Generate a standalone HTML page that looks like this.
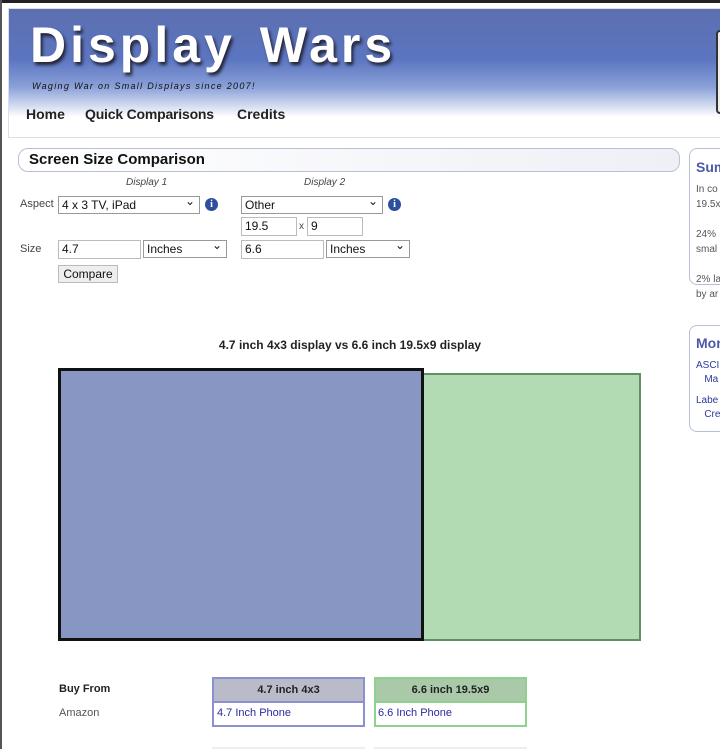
<!DOCTYPE html>
<html><head><style>
body{margin:0;width:720px;height:749px;overflow:hidden;background:#fff;font-family:"Liberation Sans",sans-serif;position:relative}
.a{position:absolute}
.sel{position:absolute;border:1px solid #999;font-size:12px;line-height:16px;padding-left:3px;box-sizing:border-box;height:18px;color:#111;background:#fff}
.sel:after{content:"⌄";position:absolute;right:4px;top:-4px;font-size:12px}
.inp{position:absolute;border:1px solid #bbb;height:19px;box-sizing:border-box;font-size:12px;line-height:17px;padding-left:3px;color:#111}
.info{position:absolute;width:13px;height:13px;border-radius:50%;background:#2e4f9e;color:#fff;font-size:10px;font-weight:bold;text-align:center;line-height:13px;font-family:"Liberation Serif",serif}
.nw{white-space:nowrap;overflow:hidden}
</style></head><body>
<div class="a" style="left:0;top:0;width:720px;height:3px;background:#222"></div>
<div class="a" style="left:0;top:0;width:2px;height:749px;background:#555"></div>
<div class="a" style="left:8px;top:8px;width:712px;height:128px;border:1px solid #dde;border-right:none;background:linear-gradient(#5d6fb0 0px,#5b75c0 50px,#8aa0d8 78px,#fff 108px)"></div>
<div class="a" style="left:30px;top:16px;font-size:50px;font-weight:bold;color:#fff;letter-spacing:4px;word-spacing:6px;text-shadow:2px 3px 3px #223">Display Wars</div>
<div class="a" style="left:32px;top:81px;font-size:9px;color:#111;letter-spacing:1.3px;font-style:italic">Waging War on Small Displays since 2007!</div>
<div class="a" style="left:26px;top:106px;font-size:14px;font-weight:bold;color:#222">Home</div>
<div class="a" style="left:85px;top:106px;font-size:14px;font-weight:bold;color:#222;letter-spacing:-0.2px">Quick Comparisons</div>
<div class="a" style="left:237px;top:106px;font-size:14px;font-weight:bold;color:#222">Credits</div>
<div class="a" style="left:716px;top:30px;width:6px;height:80px;border:2px solid #333;border-right:none;border-radius:4px 0 0 4px;background:#eee"></div>

<div class="a" style="left:18px;top:148px;width:662px;height:24px;border:1px solid #b8c0d8;border-radius:10px;box-sizing:border-box;background:linear-gradient(90deg,#fff,#eef0f6)"></div>
<div class="a" style="left:29px;top:151px;font-size:15px;font-weight:bold;color:#111">Screen Size Comparison</div>
<div class="a" style="left:126px;top:177px;font-size:10px;font-style:italic;color:#444">Display 1</div>
<div class="a" style="left:304px;top:177px;font-size:10px;font-style:italic;color:#444">Display 2</div>
<div class="a" style="left:20px;top:198px;font-size:11px;color:#444">Aspect</div>
<div class="sel" style="left:58px;top:196px;width:142px">4 x 3 TV, iPad</div>
<div class="info" style="left:205px;top:198px">i</div>
<div class="sel" style="left:241px;top:196px;width:142px">Other</div>
<div class="info" style="left:388px;top:198px">i</div>
<div class="inp" style="left:241px;top:217px;width:56px">19.5</div>
<div class="a" style="left:299px;top:221px;font-size:10px;color:#444">x</div>
<div class="inp" style="left:307px;top:217px;width:56px">9</div>
<div class="a" style="left:20px;top:243px;font-size:11px;color:#444">Size</div>
<div class="inp" style="left:58px;top:240px;width:83px">4.7</div>
<div class="sel" style="left:143px;top:240px;width:84px">Inches</div>
<div class="inp" style="left:241px;top:240px;width:83px">6.6</div>
<div class="sel" style="left:326px;top:240px;width:84px">Inches</div>
<div class="a" style="left:58px;top:265px;width:60px;height:18px;border:1px solid #bbb;background:#eee;box-sizing:border-box;font-size:12px;line-height:16px;text-align:center;color:#111">Compare</div>

<div class="a" style="left:689px;top:148px;width:40px;height:137px;border:1px solid #b8c0d8;border-radius:8px;box-sizing:border-box"></div>
<div class="a nw" style="left:696px;top:159px;width:24px;font-size:14px;font-weight:bold;color:#4a5aa8">Sum</div>
<div class="a nw" style="left:696px;top:182px;width:24px;font-size:10px;line-height:15px;color:#555">In co<br>19.5x<br><br>24%<br>smal<br><br>2% la<br>by ar</div>
<div class="a" style="left:689px;top:325px;width:40px;height:107px;border:1px solid #b8c0d8;border-radius:8px;box-sizing:border-box"></div>
<div class="a nw" style="left:696px;top:335px;width:24px;font-size:14px;font-weight:bold;color:#4a5aa8">Mor</div>
<div class="a nw" style="left:696px;top:359px;width:24px;font-size:10px;line-height:14px;color:#2a3a99">ASCI<br>&nbsp;&nbsp;&nbsp;Ma</div>
<div class="a nw" style="left:696px;top:394px;width:24px;font-size:10px;line-height:14px;color:#2a3a99">Labe<br>&nbsp;&nbsp;&nbsp;Cre</div>

<div class="a" style="left:0;top:338px;width:700px;text-align:center;font-size:12px;font-weight:bold;color:#222">4.7 inch 4x3 display vs 6.6 inch 19.5x9 display</div>
<div class="a" style="left:59px;top:373px;width:582px;height:268px;background:#b2dbb4;border:2px solid #5f8f63;box-sizing:border-box"></div>
<div class="a" style="left:58px;top:368px;width:366px;height:273px;background:#8896c4;border:3px solid #111;box-sizing:border-box"></div>

<div class="a" style="left:59px;top:683px;font-size:11px;font-weight:bold;color:#222">Buy From</div>
<div class="a" style="left:59px;top:707px;font-size:11px;color:#555">Amazon</div>
<div class="a" style="left:212px;top:677px;width:153px;height:50px;border:2px solid #8c8fd0;box-sizing:border-box"></div>
<div class="a" style="left:214px;top:679px;width:149px;height:22px;background:#babbc9;border-bottom:2px solid #8c8fd0;font-size:11px;font-weight:bold;line-height:22px;text-align:center;color:#222">4.7 inch 4x3</div>
<div class="a" style="left:217px;top:707px;font-size:11px;color:#2a2aa0">4.7 Inch Phone</div>
<div class="a" style="left:374px;top:677px;width:153px;height:50px;border:2px solid #8fd08f;box-sizing:border-box"></div>
<div class="a" style="left:376px;top:679px;width:149px;height:22px;background:#a9c9a9;border-bottom:2px solid #8fd08f;font-size:11px;font-weight:bold;line-height:22px;text-align:center;color:#222">6.6 inch 19.5x9</div>
<div class="a" style="left:378px;top:707px;font-size:11px;color:#2a2aa0">6.6 Inch Phone</div>
<div class="a" style="left:212px;top:747px;width:153px;height:2px;background:#eee"></div>
<div class="a" style="left:374px;top:747px;width:153px;height:2px;background:#eee"></div>
</body></html>
